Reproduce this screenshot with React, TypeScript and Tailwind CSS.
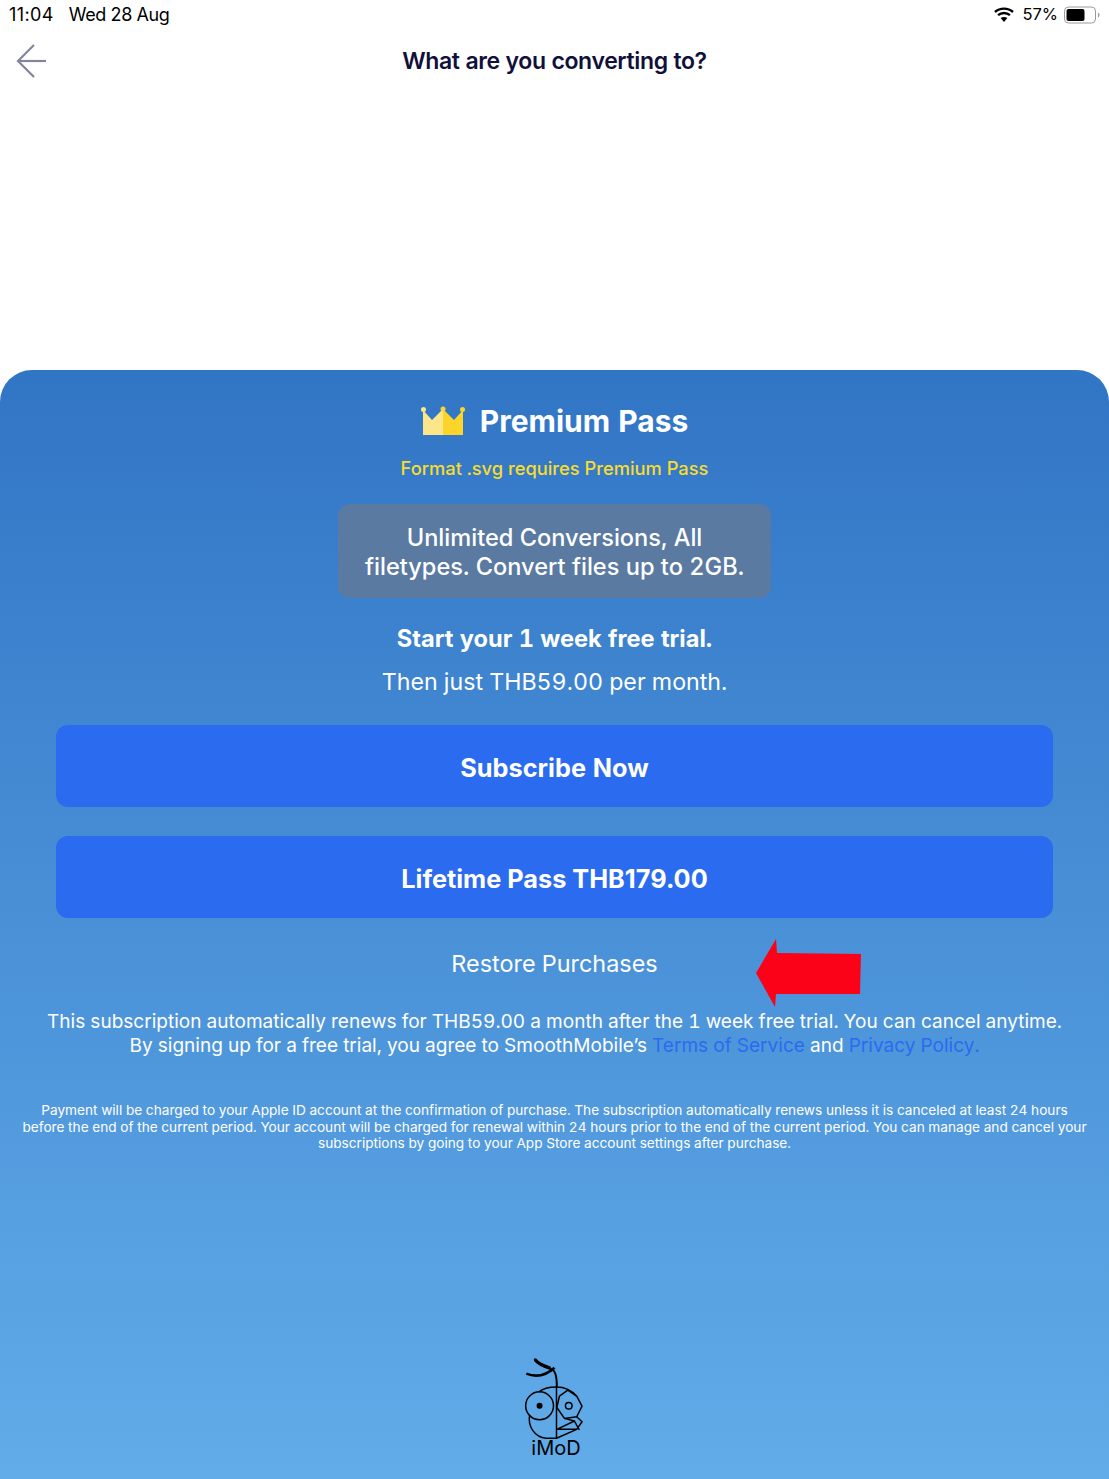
import React from "react";

const Crown = () => (
  <svg width="44" height="32" viewBox="0 0 44 32">
    <path d="M2 5 L11 15 L22 4 L22 30 L2 30 Z" fill="#fde58a" />
    <path d="M42 5 L33 15 L22 4 L22 30 L42 30 Z" fill="#fdd52a" />
    <circle cx="2.5" cy="4.5" r="2.5" fill="#fde58a" />
    <circle cx="22" cy="4" r="2.5" fill="#fdd52a" />
    <circle cx="41.5" cy="4.5" r="2.5" fill="#fdd52a" />
  </svg>
);

const Battery = () => (
  <svg width="36" height="18" viewBox="0 0 36 18">
    <rect x="0.5" y="1" width="31" height="16" rx="4" fill="none" stroke="#9a9a9a" strokeWidth="1" />
    <rect x="2.5" y="3" width="18" height="12" rx="2" fill="#000" />
    <path d="M34 6.5 C36 7.5 36 10.5 34 11.5 Z" fill="#9a9a9a" />
  </svg>
);

const Wifi = () => (
  <svg width="20" height="15" viewBox="0 0 20 15">
    <path d="M1 5 C6 0.5 14 0.5 19 5" fill="none" stroke="#000" strokeWidth="2.4" />
    <path d="M4 8.2 C7.5 5.2 12.5 5.2 16 8.2" fill="none" stroke="#000" strokeWidth="2.4" />
    <path d="M10 15 L6.6 11 C8.6 9.5 11.4 9.5 13.4 11 Z" fill="#000" />
  </svg>
);

// drawn in the 3x coordinates of the crop, hence the viewBox offset
const Logo = () => (
  <svg width="63" height="83" viewBox="70 20 190 250" fill="none" stroke="#000" strokeWidth="4.5" strokeLinejoin="round">
    <path d="M106 30 C118 46 140 52 158 58 C168 62 172 78 172 108" strokeWidth="6" />
    <path d="M107 28 C116 40 130 46 150 52" strokeWidth="9" strokeLinecap="round" />
    <path d="M80 70 C100 78 130 84 165 52" strokeWidth="8" />
    <circle cx="120" cy="167" r="42" />
    <circle cx="120" cy="167" r="9" fill="#000" stroke="none" />
    <path d="M118 125 C132 112 152 110 171 110 C190 110 215 118 232 138" />
    <path d="M171 106 V264" />
    <path d="M205 120 L232 138 L248 168 L232 200 L195 205 L172 172 L180 138 Z" />
    <circle cx="208" cy="167" r="10" />
    <path d="M232 200 L248 215 L232 238 L172 238 L225 213 L195 205" />
    <path d="M225 213 L240 240" />
    <path d="M90 195 C84 228 104 262 140 265 L171 265 L232 238" />
  </svg>
);

const App = () => {
  return (
    <div className="w-[1109px] h-[1479px] flex flex-col bg-white font-['Inter',sans-serif] tabular-nums overflow-hidden">
      <div className="h-[29px] px-[9px] flex items-center justify-between text-[18px] text-black normal-nums">
        <div className="flex gap-[15px]">
          <span className="tracking-[0.4px]">11:04</span>
          <span className="tracking-[-0.4px]">Wed 28 Aug</span>
        </div>
        <div className="flex items-center">
          <Wifi />
          <span className="text-[16.5px] ml-[8px] mr-[6px]">57%</span>
          <Battery />
        </div>
      </div>

      <div className="h-[341px] relative">
        <div className="pt-[16px] text-center text-[23px] leading-[32px] font-semibold tracking-[-0.37px] text-[#10103a]">
          What are you converting to?
        </div>
        <svg className="absolute left-[15px] top-[14px]" width="34" height="36" viewBox="0 0 34 36" fill="none" stroke="#85849f" strokeWidth="2.2">
          <path d="M31 18 H3" />
          <path d="M19 2 L3 18 L19 34" />
        </svg>
      </div>

      <div className="flex-1 relative rounded-t-[32px] bg-gradient-to-b from-[#3175c5] to-[#62ace9] flex flex-col items-center text-white">
        <div className="mt-[33px] h-[36px] flex items-center gap-[15px]">
          <Crown />
          <span className="text-[30px] font-bold">Premium Pass</span>
        </div>
        <div className="mt-[15px] h-[28px] leading-[28px] text-[18.3px] font-medium text-[#f8dc2e]">
          Format .svg requires Premium Pass
        </div>
        <div className="mt-[22px] w-[433px] h-[94px] pt-[2px] rounded-xl bg-[#5a7aa2] flex items-center justify-center text-center text-[23.6px] leading-[29px] font-medium">
          <p>
            Unlimited Conversions, All
            <br />
            filetypes. Convert files up to 2GB.
          </p>
        </div>
        <div className="mt-[26px] h-[30px] leading-[30px] text-[23.6px] font-bold">Start your 1 week free trial.</div>
        <div className="mt-[13px] h-[30px] leading-[30px] text-[23.2px]">Then just THB59.00 per month.</div>

        <div className="mt-[28px] w-[997px] flex flex-col gap-[29px]">
          <button className="h-[82px] pt-[3px] rounded-xl bg-[#2b6bf0] text-[25.3px] font-bold">Subscribe Now</button>
          <button className="h-[82px] pt-[3px] rounded-xl bg-[#2b6bf0] text-[25.3px] font-bold normal-nums">Lifetime Pass THB179.00</button>
        </div>

        <div className="mt-[31px] h-[30px] leading-[30px] text-[23.4px]">Restore Purchases</div>

        <div className="mt-[31px] text-center text-[19.05px] leading-[24px]">
          <p>This subscription automatically renews for THB59.00 a month after the 1 week free trial. You can cancel anytime.</p>
          <p>
            By signing up for a free trial, you agree to SmoothMobile’s <span className="text-[#2b6bf0]">Terms of Service</span> and{" "}
            <span className="text-[#2b6bf0]">Privacy Policy.</span>
          </p>
        </div>

        <div className="mt-[44px] text-center text-[13.65px] leading-[16.5px]">
          Payment will be charged to your Apple ID account at the confirmation of purchase. The subscription automatically renews unless it is canceled at least 24 hours
          <br />
          before the end of the current period. Your account will be charged for renewal within 24 hours prior to the end of the current period. You can manage and cancel your
          <br />
          subscriptions by going to your App Store account settings after purchase.
        </div>

        <div className="mt-auto mb-[21px] flex flex-col items-center">
          <Logo />
          <span className="text-[20px] leading-[20px] text-black -mt-[2px] ml-[3px]">iMoD</span>
        </div>

        <svg className="absolute left-[756px] top-[568px]" width="106" height="70" viewBox="0 0 106 70">
          <path d="M0 35 L20 1 L21 15 L105 16 L104 56 L20 56 L19 69 Z" fill="#fb0219" />
        </svg>
      </div>
    </div>
  );
};

export default App;
